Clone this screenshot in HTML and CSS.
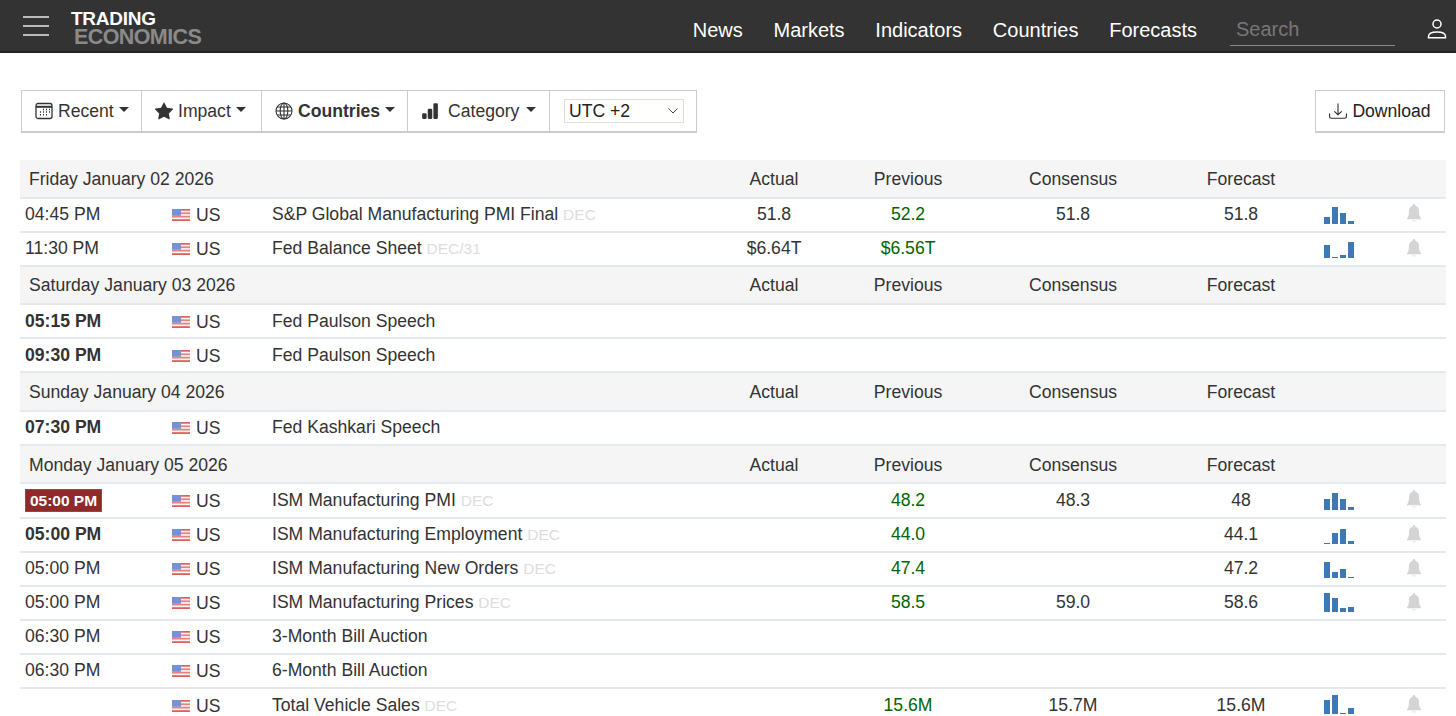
FILE: index.html
```html
<!DOCTYPE html>
<html lang="en">

<head>
    <meta charset="UTF-8">
    <title>Economic Calendar</title>
    <link rel="stylesheet" href="styles.css">
</head>

<body>
    <svg class="defs" width="0" height="0">
        <symbol id="flag" viewBox="0 0 18 12">
            <rect width="18" height="12" fill="#f4f4f6"/>
            <rect width="18" height="1.7" fill="#e0605c"/>
            <rect y="3.4" width="18" height="1.7" fill="#ea807c"/>
            <rect y="6.8" width="18" height="1.7" fill="#ea807c"/>
            <rect y="10.2" width="18" height="1.8" fill="#e0605c"/>
            <rect width="9" height="6.8" fill="#7b90d4"/>
        </symbol>
        <symbol id="bell" viewBox="0 0 14 18">
            <path d="M7 0c-.8 0-1.300.6-1.300 1.300v.5C3.300 2.400 2 4.300 2 7c0 3-.5 5.500-2 7.500v.7h14v-.7c-1.500-2-2-4.500-2-7.500 0-2.700-1.300-4.600-3.700-5.200v-.5C8.300.6 7.800 0 7 0z"/>
            <path d="M5.200 16.300h3.600l-.6 1.300H5.800z" opacity=".6"/>
        </symbol>
    </svg>

    <header class="topbar">
        <button class="burger"><span></span><span></span><span></span></button>
        <div class="logo">
            <div class="logo-top">TRADING</div>
            <div class="logo-bottom">ECONOMICS</div>
        </div>
        <nav class="nav">
            <a>News</a>
            <a>Markets</a>
            <a>Indicators</a>
            <a>Countries</a>
            <a>Forecasts</a>
        </nav>
        <div class="search">Search</div>
        <svg class="user" viewBox="0 0 20 20" width="20" height="20" fill="none" stroke="#fff" stroke-width="1.5">
            <circle cx="10" cy="5" r="4"/>
            <path d="M1.500 18.700v-1.200c0-3 3.500-4.500 8.500-4.500s8.500 1.500 8.500 4.500v1.200z"/>
        </svg>
    </header>

    <div class="toolbar">
        <div class="filters">
            <div class="filter f-recent">
                <svg width="18" height="18" viewBox="0 0 18 18" fill="none" stroke="#333" stroke-width="1.300">
                    <rect x="1" y="1.500" width="16" height="15" rx="2"/>
                    <path d="M1 4.800h16" stroke-width="2"/>
                    <path d="M8 7.500h1M11 7.500h1M14 7.500h1M5 10h1M8 10h1M11 10h1M14 10h1M5 12.700h1M8 12.700h1M11 12.700h1" stroke-width="1.400"/>
                </svg>
                Recent <i class="caret"></i>
            </div>
            <div class="filter f-impact">
                <svg width="18" height="18" viewBox="0 0 16 16" fill="#333">
                    <path d="M3.612 15.443c-.386.198-.824-.149-.746-.592l.83-4.730L.173 6.765c-.329-.314-.158-.888.283-.95l4.898-.696L7.538.792c.197-.39.73-.39.927 0l2.184 4.327 4.898.696c.441.062.612.636.282.95l-3.522 3.356.83 4.730c.078.443-.36.79-.746.592L8 13.187l-4.389 2.256z"/>
                </svg>
                Impact <i class="caret"></i>
            </div>
            <div class="filter f-countries">
                <svg width="18" height="18" viewBox="0 0 18 18" fill="none" stroke="#333" stroke-width="1.100">
                    <circle cx="9" cy="9" r="8"/>
                    <ellipse cx="9" cy="9" rx="3.800" ry="8"/>
                    <path d="M9 1v16M1 9h16M2 5h14M2 13h14"/>
                </svg>
                <b>Countries</b> <i class="caret"></i>
            </div>
            <div class="filter f-category">
                <svg width="18" height="18" viewBox="0 0 16 16" fill="#333">
                    <path d="M1 11a1 1 0 0 1 1-1h2a1 1 0 0 1 1 1v3a1 1 0 0 1-1 1H2a1 1 0 0 1-1-1v-3zm5-4a1 1 0 0 1 1-1h2a1 1 0 0 1 1 1v7a1 1 0 0 1-1 1H7a1 1 0 0 1-1-1V7zm5-5a1 1 0 0 1 1-1h2a1 1 0 0 1 1 1v12a1 1 0 0 1-1 1h-2a1 1 0 0 1-1-1V2z"/>
                </svg>
                Category <i class="caret"></i>
            </div>
            <div class="filter f-zone">
                <div class="zone">
                    UTC +2
                    <svg width="10" height="6" viewBox="0 0 10 6" fill="none" stroke="#444" stroke-width="1"><path d="M.5.500 5 5 9.500.500"/></svg>
                </div>
            </div>
        </div>
        <div class="download">
            <svg width="18" height="18" viewBox="0 0 16 16" fill="#333">
                <path d="M.5 9.900a.5.5 0 0 1 .5.500v2.500a1 1 0 0 0 1 1h12a1 1 0 0 0 1-1v-2.500a.5.5 0 0 1 1 0v2.500a2 2 0 0 1-2 2H2a2 2 0 0 1-2-2v-2.500a.5.5 0 0 1 .5-.500z"/>
                <path d="M7.646 11.854a.5.5 0 0 0 .708 0l3-3a.5.5 0 0 0-.708-.708L8.500 10.293V1.500a.5.5 0 0 0-1 0v8.793L5.354 8.146a.5.5 0 1 0-.708.708l3 3z"/>
            </svg>
            Download
        </div>
    </div>

    <table class="calendar">
        <colgroup>
            <col class="c-time"><col class="c-country"><col class="c-event">
            <col class="c-actual"><col class="c-prev"><col class="c-cons"><col class="c-fore">
            <col class="c-chart"><col class="c-bell">
        </colgroup>

        <tr class="day">
            <th colspan="3">Friday January 02 2026</th>
            <td>Actual</td><td>Previous</td><td>Consensus</td><td>Forecast</td><td></td><td></td>
        </tr>
        <tr>
            <td class="time">04:45 PM</td>
            <td class="country"><svg class="flag"><use href="#flag"/></svg>US</td>
            <td class="event">S&amp;P Global Manufacturing PMI Final <span class="ref">DEC</span></td>
            <td class="num">51.8</td><td class="num prev">52.2</td><td class="num">51.8</td><td class="num">51.8</td>
            <td><div class="chart"><span style="height:7px"></span><span style="height:17px"></span><span style="height:11px"></span><span style="height:3px"></span></div></td>
            <td class="alert"><svg class="bell"><use href="#bell"/></svg></td>
        </tr>
        <tr>
            <td class="time">11:30 PM</td>
            <td class="country"><svg class="flag"><use href="#flag"/></svg>US</td>
            <td class="event">Fed Balance Sheet <span class="ref">DEC/31</span></td>
            <td class="num">$6.64T</td><td class="num prev">$6.56T</td><td class="num"></td><td class="num"></td>
            <td><div class="chart"><span style="height:13px"></span><span style="height:1px"></span><span style="height:3px"></span><span style="height:16px"></span></div></td>
            <td class="alert"><svg class="bell"><use href="#bell"/></svg></td>
        </tr>

        <tr class="day">
            <th colspan="3">Saturday January 03 2026</th>
            <td>Actual</td><td>Previous</td><td>Consensus</td><td>Forecast</td><td></td><td></td>
        </tr>
        <tr>
            <td class="time strong">05:15 PM</td>
            <td class="country"><svg class="flag"><use href="#flag"/></svg>US</td>
            <td class="event">Fed Paulson Speech</td>
            <td colspan="6"></td>
        </tr>
        <tr>
            <td class="time strong">09:30 PM</td>
            <td class="country"><svg class="flag"><use href="#flag"/></svg>US</td>
            <td class="event">Fed Paulson Speech</td>
            <td colspan="6"></td>
        </tr>

        <tr class="day">
            <th colspan="3">Sunday January 04 2026</th>
            <td>Actual</td><td>Previous</td><td>Consensus</td><td>Forecast</td><td></td><td></td>
        </tr>
        <tr>
            <td class="time strong">07:30 PM</td>
            <td class="country"><svg class="flag"><use href="#flag"/></svg>US</td>
            <td class="event">Fed Kashkari Speech</td>
            <td colspan="6"></td>
        </tr>

        <tr class="day">
            <th colspan="3">Monday January 05 2026</th>
            <td>Actual</td><td>Previous</td><td>Consensus</td><td>Forecast</td><td></td><td></td>
        </tr>
        <tr>
            <td class="time"><span class="badge">05:00 PM</span></td>
            <td class="country"><svg class="flag"><use href="#flag"/></svg>US</td>
            <td class="event">ISM Manufacturing PMI <span class="ref">DEC</span></td>
            <td class="num"></td><td class="num prev">48.2</td><td class="num">48.3</td><td class="num">48</td>
            <td><div class="chart"><span style="height:11px"></span><span style="height:17px"></span><span style="height:11px"></span><span style="height:3px"></span></div></td>
            <td class="alert"><svg class="bell"><use href="#bell"/></svg></td>
        </tr>
        <tr>
            <td class="time strong">05:00 PM</td>
            <td class="country"><svg class="flag"><use href="#flag"/></svg>US</td>
            <td class="event">ISM Manufacturing Employment <span class="ref">DEC</span></td>
            <td class="num"></td><td class="num prev">44.0</td><td class="num"></td><td class="num">44.1</td>
            <td><div class="chart"><span style="height:1px"></span><span style="height:11px"></span><span style="height:15px"></span><span style="height:3px"></span></div></td>
            <td class="alert"><svg class="bell"><use href="#bell"/></svg></td>
        </tr>
        <tr>
            <td class="time">05:00 PM</td>
            <td class="country"><svg class="flag"><use href="#flag"/></svg>US</td>
            <td class="event">ISM Manufacturing New Orders <span class="ref">DEC</span></td>
            <td class="num"></td><td class="num prev">47.4</td><td class="num"></td><td class="num">47.2</td>
            <td><div class="chart"><span style="height:16px"></span><span style="height:6px"></span><span style="height:9px"></span><span style="height:1px"></span></div></td>
            <td class="alert"><svg class="bell"><use href="#bell"/></svg></td>
        </tr>
        <tr>
            <td class="time">05:00 PM</td>
            <td class="country"><svg class="flag"><use href="#flag"/></svg>US</td>
            <td class="event">ISM Manufacturing Prices <span class="ref">DEC</span></td>
            <td class="num"></td><td class="num prev">58.5</td><td class="num">59.0</td><td class="num">58.6</td>
            <td><div class="chart"><span style="height:19px"></span><span style="height:14px"></span><span style="height:4px"></span><span style="height:5px"></span></div></td>
            <td class="alert"><svg class="bell"><use href="#bell"/></svg></td>
        </tr>
        <tr>
            <td class="time">06:30 PM</td>
            <td class="country"><svg class="flag"><use href="#flag"/></svg>US</td>
            <td class="event">3-Month Bill Auction</td>
            <td colspan="6"></td>
        </tr>
        <tr>
            <td class="time">06:30 PM</td>
            <td class="country"><svg class="flag"><use href="#flag"/></svg>US</td>
            <td class="event">6-Month Bill Auction</td>
            <td colspan="6"></td>
        </tr>
        <tr>
            <td class="time"></td>
            <td class="country"><svg class="flag"><use href="#flag"/></svg>US</td>
            <td class="event">Total Vehicle Sales <span class="ref">DEC</span></td>
            <td class="num"></td><td class="num prev">15.6M</td><td class="num">15.7M</td><td class="num">15.6M</td>
            <td><div class="chart"><span style="height:14px"></span><span style="height:19px"></span><span style="height:1px"></span><span style="height:6px"></span></div></td>
            <td class="alert"><svg class="bell"><use href="#bell"/></svg></td>
        </tr>
    </table>
</body>

</html>
```

FILE: styles.css
```css
html,
body {
    height: 716px;
    overflow: hidden;
}

body {
    margin: 0;
    background: #fff;
    color: #333;
    font-family: "Liberation Sans", Arial, sans-serif;
    font-size: 17.6px;
}

.defs {
    display: block;
    height: 0;
}

/* top bar */
.topbar {
    height: 51px;
    background: #333;
    border-bottom: 2px solid #222;
    display: flex;
    align-items: center;
    color: #fff;
}

.burger {
    width: 26px;
    margin-left: 23px;
    padding: 0;
    background: none;
    border: 0;
    display: flex;
    flex-direction: column;
    gap: 7px;
}

.burger span {
    display: block;
    height: 2px;
    background: #bbb;
}

.logo {
    margin-left: 22px;
    margin-top: 5px;
    font-weight: bold;
    line-height: 16px;
}

.logo-top {
    font-size: 19px;
    letter-spacing: -0.25px;
}

.logo-bottom {
    font-size: 21.5px;
    letter-spacing: -0.6px;
    color: #8a8a8a;
    margin-left: 3px;
    margin-top: 2px;
}

.nav {
    margin-left: auto;
    display: flex;
    gap: 30.75px;
    font-size: 20px;
    margin-top: 9px;
}

.search {
    width: 159px;
    height: 28px;
    margin-left: 33px;
    padding-left: 6px;
    margin-top: 11px;
    border-bottom: 1px solid #888;
    color: #777;
    font-size: 20px;
    line-height: 24px;
}

.user {
    margin: 7px 9px 0 32px;
}

/* filters */
.toolbar {
    display: flex;
    justify-content: space-between;
    margin: 37px 11px 0 21px;
}

.filters {
    display: flex;
    height: 40px;
    border: 1px solid #ccc;
    border-width: 1px 1px 2px 1px;
}

.filter {
    display: flex;
    align-items: center;
    gap: 5px;
    padding-left: 13px;
    border-right: 1px solid #ccc;
}

.filter:last-child {
    border-right: 0;
}

.f-recent { width: 106px; }
.f-impact { width: 106px; }
.f-countries { width: 132px; }
.f-category { width: 128px; gap: 9px; }
.f-zone { width: 132px; padding-left: 14px; }

.caret {
    width: 0;
    height: 0;
    margin-top: -3px;
    border-left: 5px solid transparent;
    border-right: 5px solid transparent;
    border-top: 5px solid #333;
}

.f-category .caret {
    margin-left: -2px;
}

.zone {
    width: 120px;
    height: 24px;
    box-sizing: border-box;
    border: 1px solid #e0e0d8;
    padding: 0 5px 0 4px;
    display: flex;
    align-items: center;
    justify-content: space-between;
    color: #222;
}

.download {
    width: 128px;
    height: 40px;
    border: 1px solid #ccc;
    border-bottom-width: 2px;
    display: flex;
    align-items: center;
    justify-content: center;
    gap: 5px;
    color: #222;
}

/* calendar table */
.calendar {
    width: 1426px;
    margin: 27px 0 0 20px;
    border-collapse: collapse;
    table-layout: fixed;
}

.c-time { width: 152px; }
.c-country { width: 100px; }
.c-event { width: 435px; }
.c-actual { width: 134px; }
.c-prev { width: 134px; }
.c-cons { width: 196px; }
.c-fore { width: 140px; }
.c-chart { width: 69px; }
.c-bell { width: 66px; }

.calendar tr {
    height: 34.1px;
    border-bottom: 2px solid #e6e9ec;
}

.calendar td,
.calendar th {
    padding: 0;
}

.calendar td.country {
    padding-top: 2px;
}

.day {
    background: #f5f5f5;
}

.calendar tr.day {
    height: 38.5px;
}

.calendar tr.day:first-child {
    height: 37.5px;
}

.calendar .day th,
.calendar .day td {
    padding-top: 2px;
}

.calendar .day th {
    font-weight: normal;
    text-align: left;
    padding-left: 9px;
}

.day td {
    text-align: center;
}

.calendar td.time {
    padding-left: 5px;
}

.strong {
    font-weight: bold;
}

.badge {
    display: inline-block;
    width: 77px;
    height: 23px;
    box-sizing: border-box;
    background: #8f2a2a;
    border: 1px solid #a84040;
    color: #fff;
    font-size: 15.5px;
    font-weight: bold;
    line-height: 21px;
    text-align: center;
    vertical-align: middle;
}

.flag {
    width: 18px;
    height: 12px;
    margin-right: 6px;
}

.ref {
    color: #ddd;
    font-size: 15.5px;
}

.num {
    text-align: center;
}

.prev {
    color: #060;
}

.chart {
    width: 30px;
    height: 20px;
    margin: 0 0 2px 13px;
    display: flex;
    align-items: flex-end;
    gap: 2px;
}

.chart span {
    width: 6px;
    background: #3d7ab5;
}

.alert {
    text-align: center;
}

.bell {
    display: inline-block;
    width: 14px;
    height: 18px;
    fill: #d4d4d4;
    margin: 0 0 3px 2px;
    vertical-align: middle;
}
```
